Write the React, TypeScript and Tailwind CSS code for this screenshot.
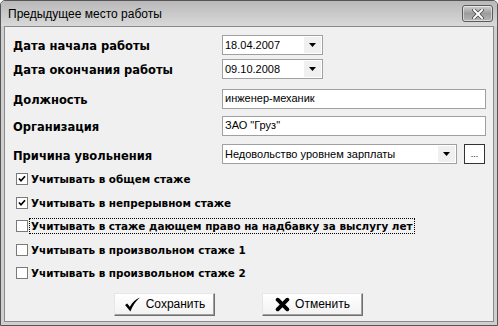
import React from 'react'

const font = { fontFamily: '"Liberation Sans", Arial, sans-serif' }
const bold = { fontFamily: '"DejaVu Sans", Verdana, sans-serif' }

const Arrow = () => (
  <div className="flex h-full w-[17px] items-center justify-center bg-[#f0f0f0]">
    <svg width="7" height="4" viewBox="0 0 7 4">
      <path d="M0 0h7L3.5 4z" fill="#000" />
    </svg>
  </div>
)

const Combo = ({ value, width }: { value: string; width: string }) => (
  <div className={`flex h-[20px] items-center border border-[#a0a0a0] bg-white pl-[2px] pr-[1px] ${width}`}>
    <span className="flex-1 text-[11px] leading-none text-black" style={font}>
      {value}
    </span>
    <div className="h-[16px]">
      <Arrow />
    </div>
  </div>
)

const Field = ({ value }: { value: string }) => (
  <div className="flex h-[20px] w-[264px] items-center border border-[#a0a0a0] bg-white px-[2px]">
    <span className="text-[11px] leading-none text-black" style={font}>
      {value}
    </span>
  </div>
)

const Label = ({ children }: { children: React.ReactNode }) => (
  <div className="w-[217px] pl-[8px] pt-[3px] text-[11.5px] font-bold text-black" style={bold}>
    {children}
  </div>
)

const Check = ({ checked, label, focus }: { checked?: boolean; label: string; focus?: boolean }) => (
  <div className="flex h-[23.5px] items-center pl-[11px]">
    <div className="flex h-[12px] w-[12px] items-center justify-center border border-[#7a7a7a] bg-white">
      {checked && (
        <svg width="8" height="8" viewBox="0 0 8 8">
          <path d="M1 3.5l2 2.2L7 1.2" fill="none" stroke="#000" strokeWidth="1.7" />
        </svg>
      )}
    </div>
    <span
      className={`ml-[2px] px-[1px] text-[10.4px] font-bold leading-[14px] text-black ${focus ? 'outline outline-1 outline-dotted outline-black' : ''}`}
      style={bold}
    >
      {label}
    </span>
  </div>
)

const Button = ({ icon, text }: { icon: React.ReactNode; text: string }) => (
  <div className="flex h-[23px] w-[101px] items-center justify-center gap-[5px] border border-t-[#e6e6e6] border-l-[#e6e6e6] border-r-[#6f6f6f] border-b-[#6f6f6f] bg-gradient-to-b from-white to-[#f2f2f2] shadow-[inset_-1px_-1px_0_#a0a0a0]">
    {icon}
    <span className="text-[12px] text-black" style={font}>
      {text}
    </span>
  </div>
)

export default function App() {
  return (
    <div className="h-[326px] w-[498px] overflow-hidden rounded-t-[5px] border border-[#555] bg-[#cfcfcf]">
      {/* Title bar */}
      <div className="flex h-[25px] items-center justify-between bg-gradient-to-b from-[#b9b9b9] to-[#d9d9d9] pl-[7px] pr-[4px]">
        <span className="text-[12px] text-black" style={font}>
          Предыдущее место работы
        </span>
        <div className="flex h-[17px] w-[31px] items-center justify-center rounded-[3px] border border-[#5b5b5b] bg-gradient-to-b from-[#d0d0d0] via-[#9c9c9c] to-[#b5b5b5] shadow-[inset_0_0_0_1px_rgba(255,255,255,0.5)]">
          <svg width="12" height="10" viewBox="0 0 12 10">
            <path d="M2 1l8 8M10 1L2 9" stroke="#444" strokeWidth="3.4" strokeLinecap="square" />
            <path d="M2 1l8 8M10 1L2 9" stroke="#fff" strokeWidth="2" strokeLinecap="square" />
          </svg>
        </div>
      </div>

      {/* Body */}
      <div className="mx-[3px] mb-[3px] h-[296px] border border-[#8a8a8a] bg-[#f0f0f0]">
        <div className="flex flex-col pt-[8px]">
          <div className="flex items-center">
            <Label>Дата начала работы</Label>
            <Combo value="18.04.2007" width="w-[101px]" />
          </div>
          <div className="mt-[4px] flex items-center">
            <Label>Дата окончания работы</Label>
            <Combo value="09.10.2008" width="w-[101px]" />
          </div>
          <div className="mt-[9px] flex items-center">
            <Label>Должность</Label>
            <Field value="инженер-механик" />
          </div>
          <div className="mt-[7px] flex items-center">
            <Label>Организация</Label>
            <Field value='ЗАО "Груз"' />
          </div>
          <div className="mt-[7px] flex items-center">
            <div className="pt-[2px]">
              <Label>Причина увольнения</Label>
            </div>
            <Combo value="Недовольство уровнем зарплаты" width="w-[235px]" />
            <div className="ml-[7px] flex h-[20px] w-[21px] items-end justify-center border border-[#333] bg-white pb-[4px]">
              <span className="text-[9px] leading-none text-black" style={font}>
                ...
              </span>
            </div>
          </div>
        </div>

        <div className="mt-[2px] flex flex-col">
          <Check checked label="Учитывать в общем стаже" />
          <Check checked label="Учитывать в непрерывном стаже" />
          <Check focus label="Учитывать в стаже дающем право на надбавку за выслугу лет" />
          <Check label="Учитывать в произвольном стаже 1" />
          <Check label="Учитывать в произвольном стаже 2" />
        </div>

        <div className="mt-[8px] flex gap-[47px] pl-[109px]">
          <Button
            text="Сохранить"
            icon={
              <svg width="17" height="15" viewBox="0 0 16 14">
                <path d="M1 7.5l2-1.5 2.5 3C8 5 11 2 15 0.5 11 4 8 8.5 6 13.5z" fill="#000" />
              </svg>
            }
          />
          <Button
            text="Отменить"
            icon={
              <svg width="15" height="15" viewBox="0 0 14 14">
                <path d="M2.5 2.5l9 9M11.5 2.5l-9 9" stroke="#000" strokeWidth="3.6" strokeLinecap="round" />
              </svg>
            }
          />
        </div>
      </div>
    </div>
  )
}
